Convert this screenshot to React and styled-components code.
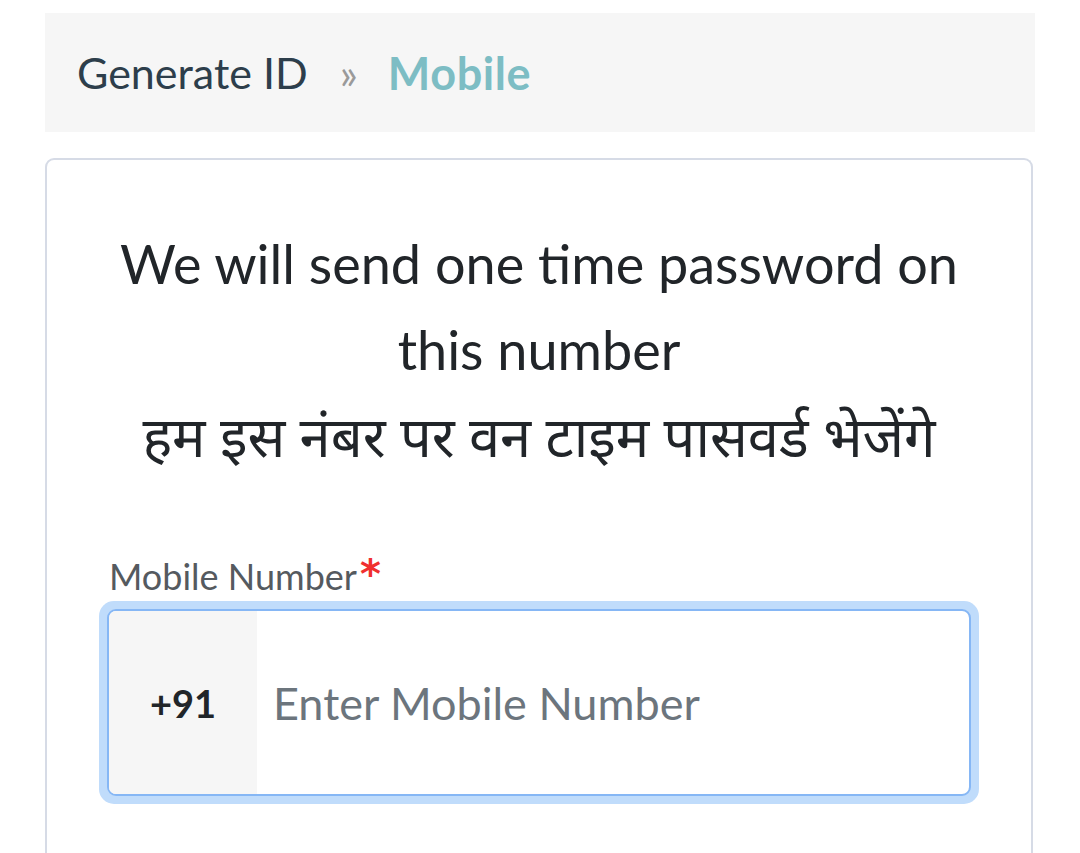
import React from 'react';
import styled, { createGlobalStyle } from 'styled-components';

const GlobalStyle = createGlobalStyle`
  body {
    margin: 0;
    background: #ffffff;
    font-family: "Lato", "Noto Sans", "Noto Sans Devanagari", sans-serif;
    color: #212529;
  }
`;

const Page = styled.div`
  padding: 13px 45px 0 45px;
  display: flex;
  flex-direction: column;
  gap: 26px;
  height: 840px;
  overflow: hidden;
`;

const Breadcrumb = styled.nav`
  display: flex;
  align-items: center;
  height: 119px;
  padding: 0 32px;
  background: #f6f6f6;
  font-size: 43px;
`;

const Crumb = styled.span`
  color: #2d3e4b;
`;

const Sep = styled.span`
  color: #9a9a9a;
  font-size: 42px;
  margin: 0 30px 0 32px;
`;

const Active = styled.span`
  color: #7dbdc4;
  font-weight: 700;
  font-size: 45px;
  letter-spacing: 0.6px;
`;

const Card = styled.div`
  border: 2px solid #d6dbe6;
  border-bottom: none;
  border-radius: 9px 9px 0 0;
  margin-right: 2px;
  flex: 1;
  padding: 61px 52px 0 52px;
`;

const Heading = styled.h2`
  margin: 0;
  text-align: center;
  font-weight: 400;
  font-size: 54px;
  line-height: 86px;
  color: #212529;
`;

const Hindi = styled.span`
  font-size: 56px;
`;

const Label = styled.label`
  display: block;
  margin-top: 74px;
  margin-left: 10px;
  font-size: 36px;
  line-height: 44px;
  color: #555a5f;
`;

const Star = styled.span`
  color: #f0302f;
  font-family: "DejaVu Sans", sans-serif;
  font-weight: 700;
  font-size: 40px;
  line-height: 40px;
  vertical-align: top;
  margin-left: 3px;
`;

const Ring = styled.div`
  margin-top: 3px;
  border-radius: 15px;
  padding: 8px;
  background: #c0dcfb;
`;

const Field = styled.div`
  display: flex;
  height: 183px;
  border: 2px solid #86b7f5;
  border-radius: 9px;
  background: #fff;
  overflow: hidden;
`;

const Prefix = styled.div`
  width: 148px;
  display: flex;
  align-items: center;
  justify-content: center;
  background: #f6f6f6;
  font-size: 38px;
  font-weight: 700;
  color: #212529;
`;

const Input = styled.input`
  flex: 1;
  border: none;
  outline: none;
  padding: 0 16px;
  font-family: inherit;
  font-size: 45px;
  color: #212529;
  caret-color: #212529;
  background: transparent;
  &::placeholder {
    color: #6c757d;
  }
`;

export default function App() {
  return (
    <>
      <GlobalStyle />
      <Page>
        <Breadcrumb>
          <Crumb>Generate ID</Crumb>
          <Sep>»</Sep>
          <Active>Mobile</Active>
        </Breadcrumb>
        <Card>
          <Heading>
            We will send one time password on this number
            <br />
            <Hindi>हम इस नंबर पर वन टाइम पासवर्ड भेजेंगे</Hindi>
          </Heading>
          <Label>
            Mobile Number<Star>*</Star>
          </Label>
          <Ring>
            <Field>
              <Prefix>+91</Prefix>
              <Input placeholder="Enter Mobile Number" autoFocus />
            </Field>
          </Ring>
        </Card>
      </Page>
    </>
  );
}
